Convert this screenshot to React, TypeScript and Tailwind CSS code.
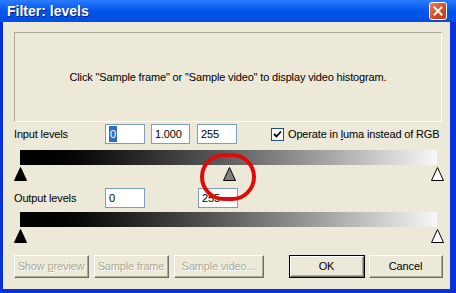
import React from "react";

const font = { fontFamily: '"Liberation Sans", Arial, sans-serif' };

function Tri({ fill }: { fill: string }) {
  return (
    <svg width="13" height="14" viewBox="0 0 13 14">
      <polygon points="6.5,0.5 12.5,13.5 0.5,13.5" fill={fill} stroke="#000" strokeWidth="1" />
    </svg>
  );
}

function Slider({ thumbs }: { thumbs: { x: number; fill: string }[] }) {
  return (
    <div className="relative ml-[6px] h-[32px] w-[417px]">
      <div className="h-[15px] w-[417px] bg-gradient-to-r from-[#000000] to-[#f8f8f8]" />
      {thumbs.map((t, i) => (
        <div key={i} className="absolute top-[17px]" style={{ left: t.x - 6 }}>
          <Tri fill={t.fill} />
        </div>
      ))}
    </div>
  );
}

function Edit({ value, w, selected }: { value: string; w: string; selected?: boolean }) {
  return (
    <div className={`flex h-[20px] ${w} items-center border border-[#7f9db9] bg-white pl-[3px] text-[11px] text-black`}>
      {selected ? <span className="bg-[#316ac5] px-[1px] text-white">{value}</span> : <span>{value}</span>}
    </div>
  );
}

function Btn({ label, w, disabled, def }: { label: React.ReactNode; w: string; disabled?: boolean; def?: boolean }) {
  const inner = (
    <div className="flex h-full w-full items-center justify-center border-t border-l border-t-white border-l-white border-b border-r border-b-[#716f64] border-r-[#716f64] bg-[#ece9d8]">
      <div className="flex h-full w-full items-center justify-center border-b border-r border-b-[#aca899] border-r-[#aca899]">
        <span
          className={`text-[11px] ${disabled ? "text-[#aca899]" : "text-black"}`}
          style={disabled ? { textShadow: "1px 1px 0 #ffffff" } : undefined}
        >
          {label}
        </span>
      </div>
    </div>
  );
  return (
    <div className={`h-[23px] ${w} ${def ? "border border-black" : ""}`}>{inner}</div>
  );
}

export default function App() {
  return (
    <div className="flex h-[293px] w-[456px] flex-col bg-[#0831d9]" style={font}>
      {/* title bar */}
      <div className="flex h-[22px] items-center justify-between bg-gradient-to-b from-[#2a7bff] via-[#0055ea] to-[#0150e0] pl-[7px] pr-[9px]">
        <span className="text-[14px] font-bold text-white" style={{ textShadow: "1px 1px 0 #0a1e8c" }}>
          Filter: levels
        </span>
        <div className="flex h-[18px] w-[18px] items-center justify-center rounded-[3px] border border-white bg-gradient-to-br from-[#e8825e] via-[#d94c24] to-[#c43a14]">
          <svg width="10" height="10" viewBox="0 0 10 10">
            <path d="M1.5 1.5 L8.5 8.5 M8.5 1.5 L1.5 8.5" stroke="#fff" strokeWidth="2" strokeLinecap="square" />
          </svg>
        </div>
      </div>
      {/* body */}
      <div className="flex flex-1 pb-[4px] pl-[3px] pr-[6px]">
        <div className="relative flex flex-1 flex-col bg-[#ece9d8] pl-[11px] pt-[10px] text-[11px] tracking-[-0.15px] text-black">
          {/* histogram box */}
          <div className="flex h-[90px] w-[428px] items-center justify-center border-t border-l border-t-[#aca899] border-l-[#aca899] border-b border-r border-b-white border-r-white">
            <span>Click "Sample frame" or "Sample video" to display video histogram.</span>
          </div>
          {/* input levels */}
          <div className="mt-[2px] flex h-[20px] items-center">
            <span className="w-[91px]">Input levels</span>
            <Edit value="0" w="w-[40px]" selected />
            <div className="w-[6px]" />
            <Edit value="1.000" w="w-[39px]" />
            <div className="w-[7px]" />
            <Edit value="255" w="w-[40px]" />
            <div className="ml-[34px] flex h-[13px] w-[13px] items-center justify-center border border-[#1c5180] bg-white">
              <svg width="9" height="9" viewBox="0 0 9 9">
                <path d="M1 4 L3.5 6.5 L8 1.5" fill="none" stroke="#000" strokeWidth="1.8" />
              </svg>
            </div>
            <span className="ml-[4px]">
              Operate in <span className="underline">l</span>uma instead of RGB
            </span>
          </div>
          <div className="mt-[6px]">
            <Slider
              thumbs={[
                { x: 0, fill: "#000" },
                { x: 209, fill: "#808080" },
                { x: 417, fill: "#fff" },
              ]}
            />
          </div>
          {/* output levels */}
          <div className="mt-[6px] flex h-[20px] items-center">
            <span className="w-[91px]">Output levels</span>
            <Edit value="0" w="w-[40px]" />
            <div className="w-[53px]" />
            <Edit value="255" w="w-[40px]" />
          </div>
          <div className="mt-[4px]">
            <Slider
              thumbs={[
                { x: 0, fill: "#000" },
                { x: 417, fill: "#fff" },
              ]}
            />
          </div>
          {/* buttons */}
          <div className="mt-[11px] flex items-center">
            <Btn label={<>Show <span className="underline">p</span>review</>} w="w-[75px]" disabled />
            <div className="w-[5px]" />
            <Btn label="Sample frame" w="w-[75px]" disabled />
            <div className="w-[5px]" />
            <Btn label="Sample video..." w="w-[90px]" disabled />
            <div className="w-[25px]" />
            <Btn label="OK" w="w-[76px]" def />
            <div className="w-[4px]" />
            <Btn label="Cancel" w="w-[74px]" />
          </div>
          {/* red annotation circle */}
          <div className="pointer-events-none absolute left-[197px] top-[131px] h-[48px] w-[56px] rounded-full border-[4px] border-[#e00a0a]" />
        </div>
      </div>
    </div>
  );
}
